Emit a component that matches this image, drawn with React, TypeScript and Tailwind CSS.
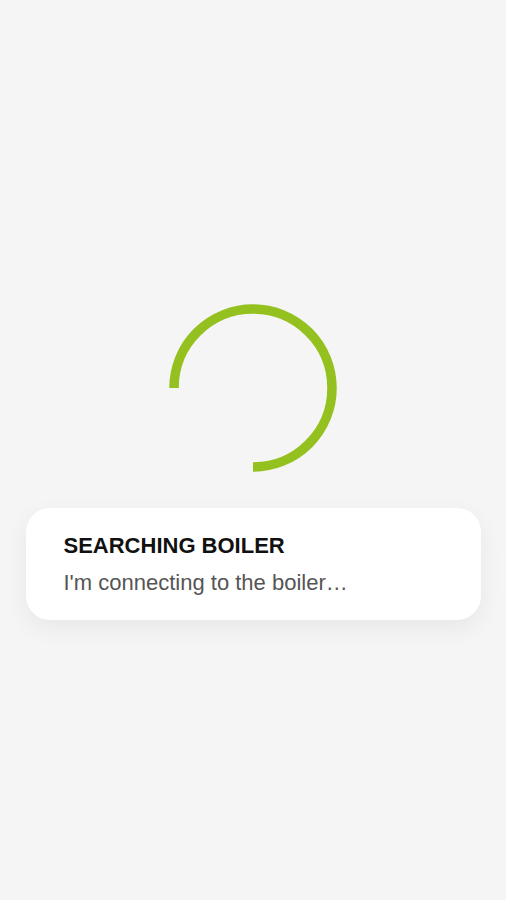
export default function App() {
  return (
    <div className="min-h-[900px] w-full bg-[#f5f5f5] flex flex-col items-center pt-[300px] font-['Liberation_Sans',Arial,sans-serif]">
      <svg width="176" height="176" viewBox="0 0 176 176" className="shrink-0">
        <path
          d="M 9 88 A 79 79 0 1 1 88 167"
          fill="none"
          stroke="#94c11f"
          strokeWidth={9.5}
        />
      </svg>
      <div className="mt-[32px] w-[455px] rounded-[24px] bg-white shadow-[0_8px_24px_rgba(0,0,0,0.06)] pl-[38px] pr-6 pt-[26px] pb-[24px]">
        <h2 className="text-[22px] leading-[24px] font-bold text-[#111]">
          SEARCHING BOILER
        </h2>
        <p className="mt-[12px] text-[22px] leading-[26px] text-[#555]">
          I'm connecting to the boiler…
        </p>
      </div>
    </div>
  );
}
